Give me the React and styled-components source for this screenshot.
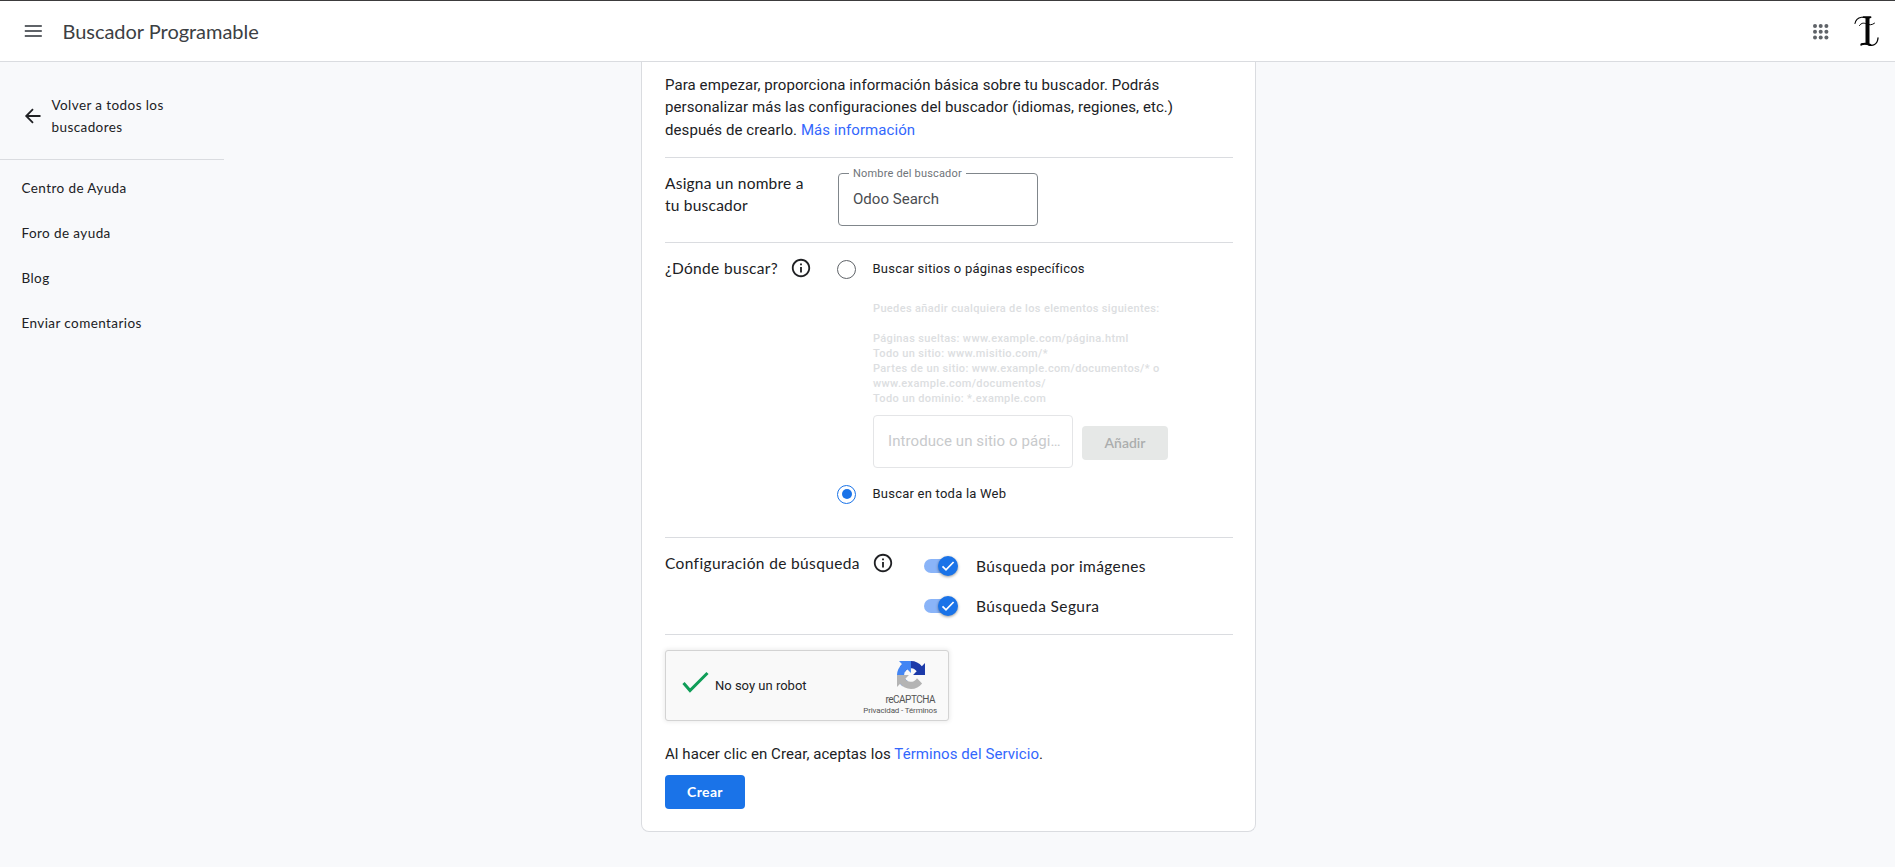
import React from "react";
import styled, { createGlobalStyle, css } from "styled-components";

const GlobalStyle = createGlobalStyle`
  *, *::before, *::after { box-sizing: border-box; }
  body {
    margin: 0;
    overflow: hidden;
    background: #f8f9fb;
    color: #202124;
    font-family: Roboto, "Liberation Sans", sans-serif;
  }
`;

const brandFont = css`
  font-family: Lato, "Open Sans", sans-serif;
`;

const Page = styled.div`
  display: flex;
  flex-direction: column;
  height: 867px;
`;

const Header = styled.header`
  display: flex;
  align-items: center;
  flex: none;
  height: 62px;
  padding: 0 13px 0 24px;
  background: #fff;
  border-top: 1px solid #3c3b3d;
  border-bottom: 1px solid #dadce0;
`;

const Title = styled.h1`
  ${brandFont}
  flex: 1;
  margin: 0 0 1px 20.5px;
  font-size: 20px;
  font-weight: 400;
  line-height: 28px;
  letter-spacing: -0.03px;
  color: #3c4043;
`;

const Icon = styled.svg`
  display: block;
  flex: none;
`;

const AppsIcon = styled(Icon)`
  margin-top: 1px;
`;

const Avatar = styled(Icon)`
  margin-left: 23px;
`;

const Body = styled.div`
  display: flex;
  flex: 1;
  min-height: 0;
`;

const Sidebar = styled.nav`
  ${brandFont}
  width: 224px;
  flex: none;
  font-size: 13.5px;
  font-weight: 400;
  line-height: 22px;
  letter-spacing: 0.41px;
`;

const BackLink = styled.a`
  display: flex;
  align-items: center;
  gap: 9.5px;
  height: 98px;
  padding: 12px 30px 0 24px;
  border-bottom: 1px solid #dadce0;
`;

const BackText = styled.span`
  flex: 1;
  padding-bottom: 2px;
`;

const SideLinks = styled.div`
  display: flex;
  flex-direction: column;
  padding-top: 5px;
`;

const SideLink = styled.a`
  display: flex;
  align-items: center;
  height: 45px;
  padding-left: 21.5px;
`;

const Main = styled.main`
  padding-left: 417px;
`;

const Card = styled.section`
  width: 615px;
  height: 770px;
  padding: 0 22px 0 23px;
  background: #fff;
  border: 1px solid #dadce0;
  border-top: 0;
  border-radius: 0 0 8px 8px;
`;

const Intro = styled.p`
  height: 95px;
  margin: 0;
  padding: 12px 50px 0 0;
  font-size: 15px;
  line-height: 22.4px;
  letter-spacing: 0.08px;
`;

const Link = styled.a`
  color: #3367fd;
`;

const Row = styled.div`
  display: flex;
  align-items: flex-start;
  height: ${(p) => p.$height}px;
  border-top: 1px solid #dadce0;
`;

const RowLabel = styled.div`
  ${brandFont}
  display: flex;
  align-items: center;
  justify-content: space-between;
  width: ${(p) => p.$width}px;
  margin-top: 14px;
  font-size: 15.5px;
  line-height: 22px;
  letter-spacing: ${(p) => p.$spacing ?? 0.33}px;
`;

const NameField = styled.fieldset`
  width: 200px;
  height: 59px;
  margin: 9px 0 0 29px;
  padding: 8px 14px 4px;
  border: 1px solid #80868b;
  border-radius: 4px;
  min-width: 0;
  font-size: 15px;
  line-height: 22px;
  letter-spacing: 0.03px;
  color: #4a4d51;
`;

const FieldLegend = styled.legend`
  margin-left: -4px;
  padding: 0 4px;
  font-size: 11px;
  line-height: 13px;
  letter-spacing: 0.18px;
  color: #6f7479;
`;

const Options = styled.div`
  display: flex;
  flex-direction: column;
  margin-left: 25px;
  padding-top: 14px;
`;

const Option = styled.label`
  display: flex;
  align-items: center;
  gap: 16.5px;
  height: 24px;
  font-size: 13px;
  letter-spacing: 0.23px;
`;

const OptionText = styled.span`
  padding-bottom: 1px;
`;

const Radio = styled.span`
  display: flex;
  align-items: center;
  justify-content: center;
  width: 19px;
  height: 19px;
  border-radius: 50%;
  border: 1px solid ${(p) => (p.$on ? "#1a73e8" : "#5f6368")};

  &::before {
    content: "";
    width: 10px;
    height: 10px;
    border-radius: 50%;
    background: ${(p) => (p.$on ? "#1a73e8" : "transparent")};
  }
`;

const SitesPanel = styled.div`
  display: flex;
  flex-direction: column;
  height: 201px;
  padding: 20px 0 0 36px;
`;

const Hint = styled.p`
  margin: 0 0 ${(p) => p.$gap || 0}px;
  font-size: 11px;
  font-weight: 500;
  line-height: 15px;
  letter-spacing: 0.36px;
  color: #dcdee1;
`;

const AddRow = styled.div`
  display: flex;
  align-items: center;
  gap: 9px;
  margin-top: 9px;
`;

const SiteField = styled.div`
  display: flex;
  align-items: center;
  width: 200px;
  height: 53px;
  padding: 0 0 1px 14px;
  border: 1px solid #e4e5e7;
  border-radius: 4px;
  font-size: 15px;
  letter-spacing: 0.08px;
  color: #c8cacc;
  white-space: nowrap;
`;

const Button = styled.button`
  ${brandFont}
  height: 34px;
  padding: 0 0 2px;
  border: 0;
  border-radius: 4px;
  font-size: 14px;
`;

const AddButton = styled(Button)`
  width: 86px;
  margin-top: 3px;
  background: #e6e8e7;
  color: #abadad;
  font-weight: 600;
`;

const CreateButton = styled(Button)`
  width: 80px;
  background: #1a73e8;
  color: #fff;
  font-weight: 700;
  letter-spacing: 0.35px;
`;

const Toggles = styled.div`
  display: flex;
  flex-direction: column;
  margin-left: 30px;
  padding-top: 8px;
`;

const ToggleRow = styled.label`
  ${brandFont}
  display: flex;
  align-items: center;
  gap: 18px;
  height: 40px;
  font-size: 15.5px;
  letter-spacing: 0.39px;
`;

const Track = styled.span`
  display: flex;
  align-items: center;
  justify-content: flex-end;
  width: 34px;
  height: 14px;
  border-radius: 7px;
  background: linear-gradient(90deg, #8ab4f8 24px, transparent 24px);
`;

const Thumb = styled.span`
  display: flex;
  align-items: center;
  justify-content: center;
  flex: none;
  width: 20px;
  height: 20px;
  border-radius: 50%;
  background: #1a73e8;
  box-shadow: 0 1px 3px rgba(0, 0, 0, 0.4);
`;

const Captcha = styled.div`
  display: flex;
  width: 284px;
  height: 71px;
  margin-top: 15px;
  padding: 0 11px 0 16px;
  background: #f9f9f9;
  border: 1px solid #d3d3d3;
  border-radius: 3px;
  box-shadow: 0 0 4px 1px rgba(0, 0, 0, 0.08);
`;

const CheckMark = styled(Icon)`
  margin-top: 19px;
`;

const CaptchaText = styled.span`
  flex: 1;
  padding: 26px 0 0 5px;
  font-size: 13px;
  line-height: 17px;
`;

const CaptchaBrand = styled.div`
  display: flex;
  flex-direction: column;
  align-items: flex-end;
  padding-top: 10px;
  color: #555;
`;

const CaptchaLogo = styled(Icon)`
  margin-right: 12px;
`;

const CaptchaName = styled.span`
  margin: 5px 2px 0 0;
  font-size: 10px;
  line-height: 12px;
  letter-spacing: -0.5px;
`;

const CaptchaLinks = styled.span`
  font-size: 8px;
  line-height: 9px;
  letter-spacing: -0.15px;
  white-space: nowrap;
`;

const Terms = styled.p`
  margin: 22px 0 10px;
  font-size: 15px;
  line-height: 22px;
  letter-spacing: 0.07px;
`;

const Footer = styled.div`
  border-top: 1px solid #dadce0;
`;

const InfoIcon = () => (
  <Icon width="22" height="22" viewBox="0 0 24 24" fill="#202124">
    <path d="M11 7h2v2h-2zm0 4h2v6h-2zm1-9C6.48 2 2 6.48 2 12s4.48 10 10 10 10-4.48 10-10S17.52 2 12 2zm0 18c-4.41 0-8-3.59-8-8s3.59-8 8-8 8 3.59 8 8-3.59 8-8 8z" />
  </Icon>
);

const Toggle = ({ children }) => (
  <ToggleRow>
    <Track>
      <Thumb>
        <Icon width="14" height="14" viewBox="0 0 14 14" fill="none" stroke="#fff" strokeWidth="1.7">
          <path d="M1.5 7.4 5 10.9 12.6 3" />
        </Icon>
      </Thumb>
    </Track>
    {children}
  </ToggleRow>
);

const dots = [2, 7.7, 13.4];

export default function App() {
  return (
    <Page>
      <GlobalStyle />
      <Header>
        <Icon width="18" height="12" viewBox="0 0 18 12" fill="#5f6368">
          <path d="M.8 0h17v2H.8zM.8 5h17v2H.8zM.8 10h17v2H.8z" />
        </Icon>
        <Title>Buscador Programable</Title>
        <AppsIcon width="16" height="16" viewBox="0 0 16 16" fill="#5f6368">
          {dots.map((y) => dots.map((x) => <circle key={`${x}-${y}`} cx={x} cy={y} r="2" />))}
        </AppsIcon>
        <Avatar width="30" height="34" viewBox="0 0 30 34" fill="none" stroke="#050505" strokeLinecap="round">
          <path d="M15.5 3v27" strokeWidth="4" strokeLinecap="butt" />
          <path d="M18.5 3.5c-3 1.5-6-.8-9-.2C6 4 3.5 6.200 3 9.500" strokeWidth="1.1" />
          <path d="M11.500 3.200h7" strokeWidth="1.800" />
          <path d="M7.500 11.500c2-3 4.500-2.600 7-1.600 2.800 1.300 5.500 1.200 8-.7" strokeWidth="1" />
          <path d="M9 31c2.500-2.600 5-1.300 7.500-.2 4 1.500 9 0 9.500-6.800" strokeWidth="1.300" />
          <path d="M9.500 30.300c3-1 6-.6 9 .6" strokeWidth="2" />
        </Avatar>
      </Header>
      <Body>
        <Sidebar>
          <BackLink>
            <Icon width="18" height="18" viewBox="0 0 18 18" fill="none" stroke="#202124" strokeWidth="1.8">
              <path d="M16.500 8H2.700M9 1.200 2.200 8 9 14.800" />
            </Icon>
            <BackText>Volver a todos los buscadores</BackText>
          </BackLink>
          <SideLinks>
            <SideLink>Centro de Ayuda</SideLink>
            <SideLink>Foro de ayuda</SideLink>
            <SideLink>Blog</SideLink>
            <SideLink>Enviar comentarios</SideLink>
          </SideLinks>
        </Sidebar>
        <Main>
          <Card>
            <Intro>
              Para empezar, proporciona información básica sobre tu buscador. Podrás
              personalizar más las configuraciones del buscador (idiomas, regiones, etc.)
              después de crearlo. <Link>Más información</Link>
            </Intro>
            <Row $height={85}>
              <RowLabel $width={144} $spacing={0.22}>Asigna un nombre a tu buscador</RowLabel>
              <NameField>
                <FieldLegend>Nombre del buscador</FieldLegend>
                Odoo Search
              </NameField>
            </Row>
            <Row $height={295}>
              <RowLabel $width={147}>¿Dónde buscar?<InfoIcon /></RowLabel>
              <Options>
                <Option><Radio /><OptionText>Buscar sitios o páginas específicos</OptionText></Option>
                <SitesPanel>
                  <Hint $gap={15}>Puedes añadir cualquiera de los elementos siguientes:</Hint>
                  <Hint>Páginas sueltas: www.example.com/página.html</Hint>
                  <Hint>Todo un sitio: www.misitio.com/*</Hint>
                  <Hint>Partes de un sitio: www.example.com/documentos/* o<br />www.example.com/documentos/</Hint>
                  <Hint>Todo un dominio: *.example.com</Hint>
                  <AddRow>
                    <SiteField>Introduce un sitio o pági…</SiteField>
                    <AddButton>Añadir</AddButton>
                  </AddRow>
                </SitesPanel>
                <Option><Radio $on /><OptionText>Buscar en toda la Web</OptionText></Option>
              </Options>
            </Row>
            <Row $height={97}>
              <RowLabel $width={229} $spacing={0.36}>Configuración de búsqueda<InfoIcon /></RowLabel>
              <Toggles>
                <Toggle>Búsqueda por imágenes</Toggle>
                <Toggle>Búsqueda Segura</Toggle>
              </Toggles>
            </Row>
            <Footer>
              <Captcha>
                <CheckMark width="28" height="26" viewBox="0 0 28 26" fill="none" stroke="#0f9d58" strokeWidth="3">
                  <path d="M1.500 13 8 20.500 25.500 3" />
                </CheckMark>
                <CaptchaText>No soy un robot</CaptchaText>
                <CaptchaBrand>
                  <CaptchaLogo width="28" height="28" viewBox="0 0 64 64">
                    <path fill="#1c3aa9" d="M64 31.955l-.033-1.370V4.687l-7.160 7.160C50.948 4.674 42.033.093 32.050.093c-10.400 0-19.622 4.960-25.458 12.640l11.736 11.860a15.550 15.550 0 0 1 4.754-5.334c2.050-1.600 4.952-2.906 8.968-2.906.485 0 .860.057 1.135.163 4.976.393 9.288 3.140 11.828 7.124l-8.307 8.307L64 31.953" />
                    <path fill="#4285f4" d="M31.862.094l-1.370.033H4.594l7.160 7.160C4.580 13.147 0 22.060 0 32.046c0 10.400 4.960 19.622 12.640 25.458L24.500 45.768a15.550 15.550 0 0 1-5.334-4.754c-1.600-2.050-2.906-4.952-2.906-8.968 0-.485.057-.860.163-1.135.393-4.976 3.140-9.288 7.124-11.828l8.307 8.307L31.860.095" />
                    <path fill="#b4b4b4" d="M.001 32.045l.033 1.370v25.898l7.160-7.160c5.860 7.173 14.774 11.754 24.760 11.754 10.400 0 19.622-4.960 25.458-12.640l-11.736-11.860a15.550 15.550 0 0 1-4.754 5.334c-2.050 1.600-4.952 2.906-8.968 2.906-.485 0-.860-.057-1.135-.163-4.976-.393-9.288-3.140-11.828-7.124l8.307-8.307c-10.522.040-22.400.066-27.295-.005" />
                  </CaptchaLogo>
                  <CaptchaName>reCAPTCHA</CaptchaName>
                  <CaptchaLinks>Privacidad - Términos</CaptchaLinks>
                </CaptchaBrand>
              </Captcha>
              <Terms>
                Al hacer clic en Crear, aceptas los <Link>Términos del Servicio</Link>.
              </Terms>
              <CreateButton>Crear</CreateButton>
            </Footer>
          </Card>
        </Main>
      </Body>
    </Page>
  );
}
